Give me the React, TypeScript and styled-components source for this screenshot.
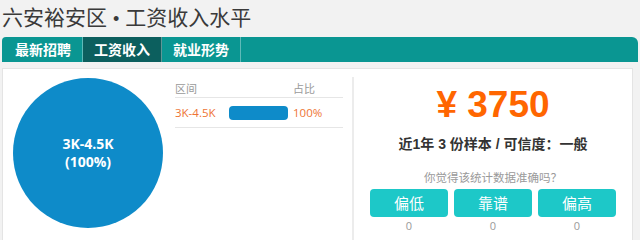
import React from "react";
import styled, { createGlobalStyle } from "styled-components";

const GlobalStyle = createGlobalStyle`
  body {
    margin: 0;
    background: #f2f2f2;
    font-family: "Open Sans", "Noto Sans CJK SC", sans-serif;
  }
`;

const tabs = ["最新招聘", "工资收入", "就业形势"];
const votes = [
  { label: "偏低", count: 0 },
  { label: "靠谱", count: 0 },
  { label: "偏高", count: 0 },
];

const App = () => {
  return (
    <Page>
      <GlobalStyle />
      <Title>
        六安裕安区<Dot>•</Dot>工资收入水平
      </Title>
      <TabBar>
        {tabs.map((t, i) => (
          <Tab key={t} $active={i === 1}>
            {t}
          </Tab>
        ))}
      </TabBar>
      <Content>
        <ChartCol>
          <Pie>
            <PieLabel>3K-4.5K</PieLabel>
            <PieLabel>(100%)</PieLabel>
          </Pie>
        </ChartCol>
        <Table>
          <HeadRow>
            <RangeCell>区间</RangeCell>
            <BarCell />
            <PctCell>占比</PctCell>
          </HeadRow>
          <DataRow>
            <RangeCell>3K-4.5K</RangeCell>
            <BarCell>
              <Bar style={{ width: "100%" }} />
            </BarCell>
            <PctCell>100%</PctCell>
          </DataRow>
        </Table>
        <Summary>
          <Price>¥ 3750</Price>
          <Sample>近1年 3 份样本 / 可信度：一般</Sample>
          <Question>你觉得该统计数据准确吗？</Question>
          <Votes>
            {votes.map((v) => (
              <Vote key={v.label}>
                <VoteButton>{v.label}</VoteButton>
                <Count>{v.count}</Count>
              </Vote>
            ))}
          </Votes>
        </Summary>
      </Content>
    </Page>
  );
};

export default App;

const Page = styled.div`
  width: 640px;
  height: 240px;
  overflow: hidden;
`;

const Title = styled.div`
  height: 34px;
  line-height: 32px;
  padding-left: 2px;
  font-family: "Noto Sans CJK SC", sans-serif;
  font-size: 21px;
  color: #3a3a3a;
`;

const Dot = styled.span`
  display: inline-block;
  margin: 0 6px;
  font-family: "Liberation Sans", sans-serif;
  font-size: 18px;
`;

const TabBar = styled.div`
  display: flex;
  height: 25px;
  margin: 3px 2px 0 2px;
  padding-left: 2px;
  background: #0a9692;
  border-radius: 4px 6px 0 0;
`;

const Tab = styled.div<{ $active?: boolean }>`
  width: 78px;
  line-height: 25px;
  text-align: center;
  font-family: "Noto Sans CJK SC", sans-serif;
  font-size: 14px;
  font-weight: 700;
  color: #ffffff;
  background: ${(p) => (p.$active ? "#0c5f5e" : "transparent")};
  border-right: 1px solid rgba(255, 255, 255, 0.35);
`;

const Content = styled.div`
  display: flex;
  height: 180px;
  margin: 6px 7px 0 2px;
  background: #ffffff;
  border: 1px solid #e4e4e4;
  border-bottom: none;
`;

const ChartCol = styled.div`
  width: 162px;
  padding: 9px 0 0 10px;
  box-sizing: border-box;
`;

const Pie = styled.div`
  width: 150px;
  height: 150px;
  border-radius: 50%;
  background: #0e8bc9;
  display: flex;
  flex-direction: column;
  align-items: center;
  justify-content: center;
  color: #ffffff;
`;

const PieLabel = styled.div`
  font-size: 14px;
  font-weight: 700;
  line-height: 18px;
`;

const Table = styled.div`
  width: 168px;
  margin-left: 10px;
  padding-top: 9px;
`;

const HeadRow = styled.div`
  display: flex;
  align-items: center;
  height: 19px;
  font-size: 11px;
  color: #9a9a9a;
  border-bottom: 1px solid #e6e6e6;
`;

const DataRow = styled.div`
  display: flex;
  align-items: center;
  height: 29px;
  font-size: 11.5px;
  color: #ee7434;
  border-bottom: 1px solid #e6e6e6;
`;

const RangeCell = styled.div`
  width: 54px;
`;

const BarCell = styled.div`
  width: 59px;
  margin-right: 5px;
`;

const Bar = styled.div`
  height: 14px;
  border-radius: 4px;
  background: #0e8bc9;
`;

const PctCell = styled.div`
  flex: 1;
`;

const Summary = styled.div`
  flex: 1;
  margin: 8px 0 7px 9px;
  padding-top: 7px;
  border-left: 2px solid #ececec;
  display: flex;
  flex-direction: column;
  align-items: center;
`;

const Price = styled.div`
  font-family: "Liberation Sans", Arial, sans-serif;
  font-size: 37px;
  font-weight: 700;
  line-height: 42px;
  color: #ff6600;
`;

const Sample = styled.div`
  margin-top: 8px;
  font-family: "Liberation Sans", "Noto Sans CJK SC", sans-serif;
  font-size: 14px;
  font-weight: 700;
  line-height: 20px;
  color: #333333;
`;

const Question = styled.div`
  margin-top: 16px;
  font-size: 11.5px;
  line-height: 16px;
  color: #9a9a9a;
`;

const Votes = styled.div`
  display: flex;
  gap: 6px;
  margin-top: 3px;
`;

const Vote = styled.div`
  display: flex;
  flex-direction: column;
  align-items: center;
`;

const VoteButton = styled.div`
  width: 78px;
  height: 28px;
  line-height: 28px;
  text-align: center;
  border-radius: 4px;
  background: #1dc8c8;
  color: #ffffff;
  font-family: "Noto Sans CJK SC", sans-serif;
  font-size: 15px;
`;

const Count = styled.div`
  margin-top: 2px;
  font-size: 11px;
  line-height: 14px;
  color: #9a9a9a;
`;
